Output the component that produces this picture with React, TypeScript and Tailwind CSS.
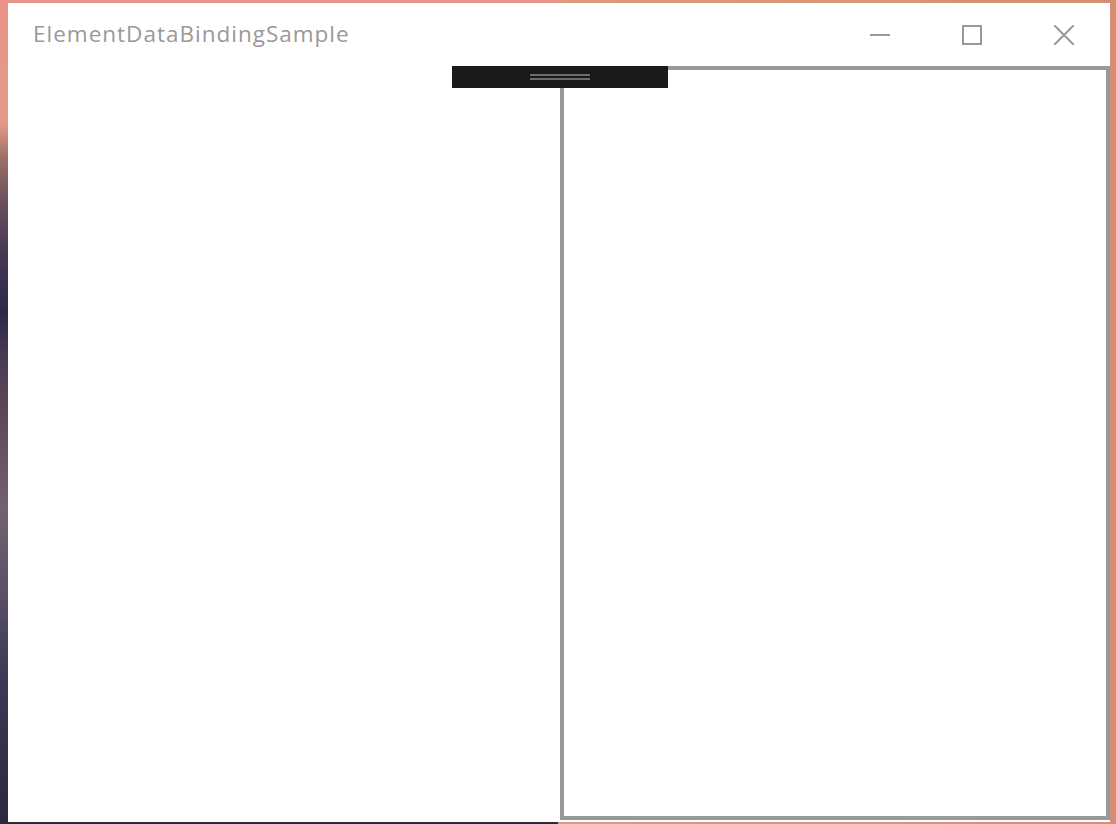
import React from "react";

// Caption button glyphs, drawn at 2x scale like the desktop shell
const Minimize = () => (
  <svg width="20" height="20" viewBox="0 0 20 20" className="block">
    <line x1="0" y1="10" x2="20" y2="10" stroke="#999" strokeWidth="2" />
  </svg>
);

const Maximize = () => (
  <svg width="20" height="20" viewBox="0 0 20 20" className="block">
    <rect x="1" y="1" width="18" height="18" fill="none" stroke="#999" strokeWidth="2" />
  </svg>
);

const Close = () => (
  <svg width="20" height="20" viewBox="0 0 20 20" className="block">
    <path d="M0 0 L20 20 M20 0 L0 20" stroke="#999" strokeWidth="2" fill="none" />
  </svg>
);

const App = () => {
  return (
    <div
      className="w-[1116px] h-[824px] overflow-hidden pt-[3px] pl-[8px] bg-[linear-gradient(90deg,transparent_0%,transparent_50%,#dd9a7c_50%,#d68e72_100%),linear-gradient(180deg,#e9948a_0%,#e39a88_15%,#a07068_19%,#6e5260_24%,#4a3a55_30%,#2c2a48_38%,#4c3c52_44%,#604c5a_52%,#72626e_62%,#5a5068_72%,#3e3854_82%,#2c2840_100%)]"
      style={{ fontFamily: '"Segoe UI", "Open Sans", "Noto Sans", sans-serif' }}
    >
      <div className="w-[1102px] h-[819px] bg-white flex flex-col">
        {/* Title bar */}
        <div className="h-[63px] flex items-center shrink-0">
          <div className="flex-1 pl-[25px] text-[22.5px] tracking-[1px] text-[#999999] leading-none -mt-[1px]">
            ElementDataBindingSample
          </div>
          <div className="flex h-full">
            <div className="w-[92px] h-full flex items-center justify-center">
              <Minimize />
            </div>
            <div className="w-[92px] h-full flex items-center justify-center">
              <Maximize />
            </div>
            <div className="w-[92px] h-full flex items-center justify-center">
              <Close />
            </div>
          </div>
        </div>

        {/* Content */}
        <div className="relative flex-1 flex">
          <div className="w-[552px] shrink-0" />
          <div className="flex-1 h-[754px] border-4 border-[#999999] bg-white" />

          {/* drag handle */}
          <div className="absolute left-[444px] top-0 w-[216px] h-[22px] bg-[#1a1a1a] flex flex-col items-center justify-center gap-[2px]">
            <div className="w-[60px] h-[2px] bg-[#6e6a72]" />
            <div className="w-[60px] h-[2px] bg-[#6e6a72]" />
          </div>
        </div>
      </div>
    </div>
  );
};

export default App;
